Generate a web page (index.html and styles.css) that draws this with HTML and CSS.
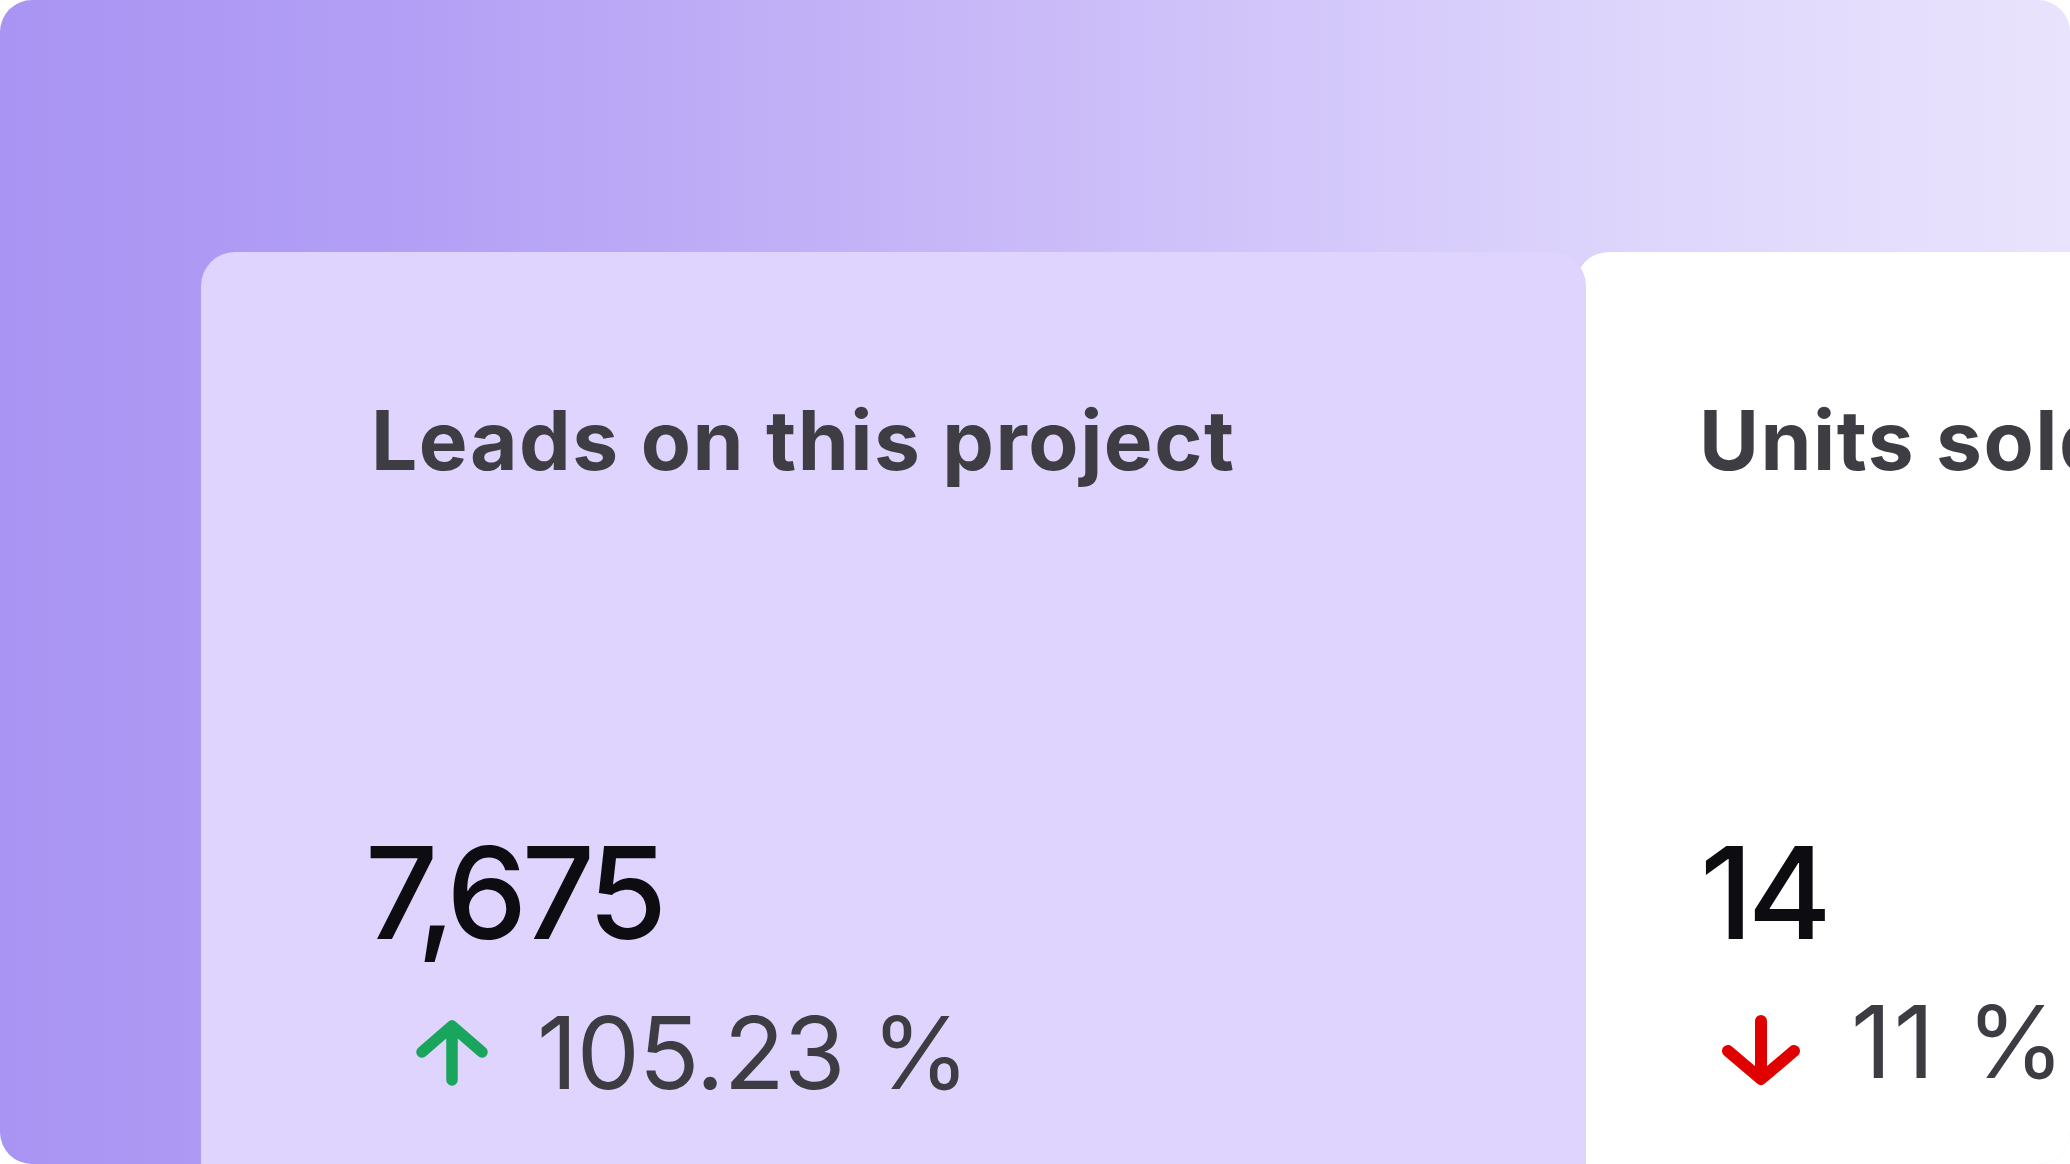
FILE: index.html
```html
<!DOCTYPE html>
<html lang="en">
<head>
<meta charset="utf-8">
<title>Project stats</title>
<link rel="stylesheet" href="styles.css">
</head>
<body>
<div class="frame">
  <div class="cards">
    <section class="card card--lead">
      <h2 class="card-title">Leads on this project</h2>
      <div class="card-value">7,675</div>
      <div class="card-change card-change--up">
        <svg class="arrow" width="74" height="66" viewBox="0 0 74 66" aria-hidden="true">
          <path d="M37 60 V8 M7 32 L37 6 L67 32" fill="none" stroke="#19a55b" stroke-width="11.5" stroke-linecap="round" stroke-linejoin="round"/>
        </svg>
        <span class="change-text">105.23 %</span>
      </div>
    </section>
    <section class="card card--units">
      <h2 class="card-title">Units sold</h2>
      <div class="card-value">14</div>
      <div class="card-change card-change--down">
        <svg class="arrow" width="82" height="72" viewBox="0 0 82 72" aria-hidden="true">
          <path d="M41 7 V64 M8 37 L41 65 L74 37" fill="none" stroke="#e00000" stroke-width="12" stroke-linecap="round" stroke-linejoin="round"/>
        </svg>
        <span class="change-text">11 %</span>
      </div>
    </section>
  </div>
</div>
</body>
</html>
```

FILE: styles.css
```css
* { box-sizing: border-box; }

html, body {
  margin: 0;
  padding: 0;
  background: #ffffff;
}

body {
  font-family: "Inter", "Lato", sans-serif;
  width: 2070px;
  height: 1164px;
  overflow: hidden;
}

.frame {
  width: 2070px;
  height: 1164px;
  border-radius: 32px;
  overflow: hidden;
  background: linear-gradient(90deg, #a994f3 0%, #b3a0f5 20%, #c3b1f7 40%, #d2c6fa 62%, #e0d8fc 82%, #e9e3fd 100%);
  padding: 252px 0 0 201px;
}

.cards {
  display: flex;
  height: 100%;
}

.card {
  display: flex;
  flex-direction: column;
  border-radius: 34px 34px 0 0;
}

.card--lead {
  width: 1385px;
  flex: none;
  background: #dfd4fe;
  z-index: 1;
  padding: 140px 0 0 170px;
}

.card--units {
  flex: 1;
  margin-left: -11px;
  background: #ffffff;
  padding: 140px 0 0 124px;
}

.card-title {
  margin: 0;
  font-size: 82px;
  line-height: 98px;
  font-weight: 700;
  color: #3f3d44;
  white-space: nowrap;
  letter-spacing: 1.5px;
}

.card-value {
  margin-top: 333px;
  margin-left: -6px;
  font-size: 128px;
  line-height: 140px;
  font-weight: 500;
  color: #0d0c10;
  letter-spacing: -5.5px;
}

.card--units .card-value {
  margin-left: 1px;
}

.card-change {
  display: flex;
  align-items: center;
  margin-top: 35px;
  white-space: nowrap;
}

.card-change--up {
  padding-left: 44px;
  gap: 48px;
}

.card-change--down {
  padding-left: 21px;
  gap: 49px;
  margin-top: 24px;
}

.card-change--down .arrow {
  margin-top: 16px;
}

.card-change--down .change-text {
  letter-spacing: 2px;
}

.arrow {
  flex: none;
  display: block;
}

.change-text {
  font-size: 100px;
  line-height: 110px;
  font-weight: 400;
  color: #3e3c43;
  letter-spacing: -1px;
}
```
